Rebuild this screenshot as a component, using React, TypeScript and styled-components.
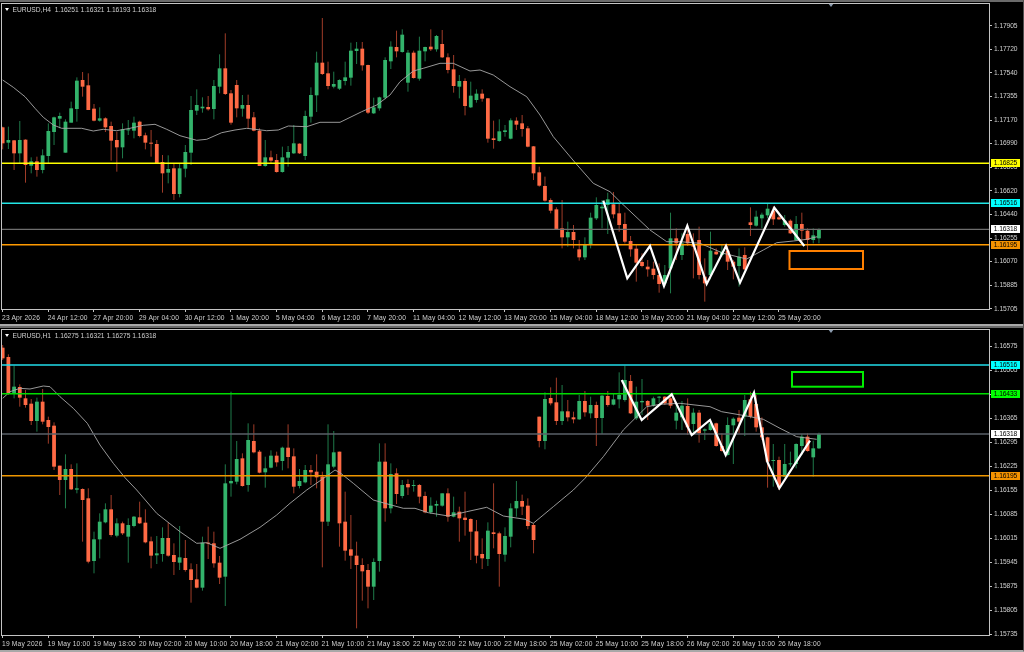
import React from 'react';
import styled, {createGlobalStyle} from 'styled-components';

const GlobalStyle = createGlobalStyle`
  html, body {
    margin: 0;
    background: #000;
  }
`;

// candles traced off the screenshot at 3x: direction, high, body top, body bottom, low
const h4Candles = `
d 380 382 430 448,u 380 420 428 447,d 420 421 460 510,u 363 420 460 490,d 418 419 495 548,u 472 484 497 520,d 470 484 510 530,u 448 466 510 520,
u 370 393 468 490,u 350 352 396 435,u 338 348 356 385,u 358 365 458 458,u 305 325 368 368,u 232 242 327 365,d 216 240 260 290,d 220 256 330 330,
d 312 326 362 364,u 322 355 362 365,d 352 355 382 396,d 365 378 422 482,d 395 420 442 515,u 370 388 442 475,u 360 388 390 405,u 350 368 392 415,
d 362 365 408 412,d 398 406 428 448,d 390 428 431 470,d 420 432 490 492,d 465 486 520 578,u 466 507 518 550,d 490 505 582 600,u 490 505 582 592,
u 435 456 506 532,u 288 330 458 495,u 268 315 332 345,u 292 320 325 338,d 288 321 328 332,u 240 258 327 358,u 163 205 260 280,d 100 205 282 285,
d 270 280 368 374,d 240 255 325 352,u 285 315 326 350,d 284 315 356 385,d 336 352 392 394,d 385 392 498 498,u 420 472 498 500,d 452 472 482 490,
d 462 480 516 518,u 440 472 516 518,u 438 456 473 500,u 375 430 460 462,d 430 431 460 462,u 332 348 468 480,u 262 285 350 368,u 155 188 286 336,
d 54 188 222 225,d 185 220 258 268,u 215 252 260 265,u 238 240 266 270,u 185 232 243 256,u 128 152 233 257,u 126 146 153 192,d 126 146 196 212,
d 194 195 338 342,u 293 322 340 342,u 290 292 325 332,u 172 180 293 298,u 124 140 184 207,d 92 141 154 172,u 88 104 156 158,u 150 158 248 275,
d 152 158 234 236,u 110 152 236 242,u 140 141 154 184,d 88 140 148 153,u 105 108 148 155,d 90 132 172 174,d 160 172 210 220,d 165 208 258 278,
u 225 243 260 295,d 235 243 318 346,u 245 287 322 324,u 268 281 300 308,d 268 281 296 305,d 294 295 416 428,d 362 415 420 446,u 358 394 423 425,
u 375 391 396 410,u 355 361 416 418,d 352 362 374 390,d 345 370 387 410,d 378 385 440 442,d 438 439 520 540,d 500 517 557 560,d 530 558 602 605,
d 595 600 632 640,d 622 628 688 690,d 600 685 712 745,u 665 696 712 740,d 675 696 720 745,d 720 748 772 782,u 712 735 772 780,u 638 653 735 745,
u 592 615 655 660,u 600 620 625 685,u 578 598 615 702,d 576 613 643 655,d 610 640 675 695,d 638 672 725 730,d 708 723 748 770,d 735 746 788 845,
d 760 786 798 802,d 780 800 808 830,d 785 806 825 838,d 790 825 852 878,u 795 825 850 858,u 638 715 805 880,d 685 715 730 780,u 700 730 765 780,
d 675 702 730 738,d 700 735 740 835,d 680 720 825 838,d 775 830 850 905,u 695 752 825 838,d 745 755 763 765,u 735 755 765 770,d 738 752 785 810,
d 780 785 800 838,u 745 770 798 860,d 742 765 808 810,d 622 667 675 708,u 632 650 677 680,u 638 644 655 685,u 610 626 646 655,d 620 632 658 675,
d 645 652 658 660,u 645 662 675 680,d 658 662 700 702,u 648 672 720 722,d 638 672 692 725,d 685 692 720 750,u 685 706 720 730,u 685 688 715 730
`;

const h1Candles = `
d 1035 1043 1075 1080,d 1063 1071 1180 1185,u 1097 1160 1180 1195,d 1153 1161 1193 1220,d 1170 1195 1215 1223,d 1197 1211 1263 1275,u 1193 1205 1263 1295,d 1167 1205 1265 1273,
d 1250 1260 1281 1331,d 1267 1277 1400 1410,d 1397 1397 1440 1485,u 1363 1407 1440 1525,d 1393 1407 1468 1470,u 1390 1465 1469 1480,d 1465 1467 1500 1625,d 1465 1495 1685 1690,
u 1595 1618 1683 1720,u 1540 1565 1618 1675,u 1510 1528 1567 1570,d 1485 1528 1605 1610,u 1555 1570 1607 1612,d 1565 1570 1600 1605,u 1555 1575 1610 1688,u 1548 1550 1578 1582,
d 1505 1552 1570 1572,d 1528 1568 1627 1630,d 1610 1624 1667 1705,u 1608 1660 1666 1692,u 1582 1614 1662 1685,d 1568 1614 1667 1670,d 1630 1665 1686 1725,u 1578 1672 1688 1710,
d 1620 1674 1710 1715,d 1690 1708 1740 1808,d 1692 1738 1763 1765,u 1610 1628 1763 1772,d 1580 1628 1630 1677,d 1595 1630 1690 1703,d 1668 1688 1733 1752,u 1393 1450 1730 1818,
u 1175 1443 1450 1490,u 1323 1377 1445 1453,d 1360 1375 1458 1460,u 1270 1320 1455 1475,d 1273 1323 1357 1360,d 1350 1355 1418 1420,u 1370 1405 1417 1463,u 1351 1367 1403 1405,
d 1355 1367 1387 1400,u 1340 1343 1383 1411,d 1273 1343 1371 1405,d 1345 1369 1460 1480,u 1407 1443 1458 1465,u 1395 1410 1447 1450,d 1395 1410 1417 1455,d 1363 1415 1432 1465,
d 1415 1430 1565 1702,u 1273 1393 1565 1578,u 1293 1357 1400 1405,d 1355 1355 1570 1640,d 1475 1565 1652 1682,d 1545 1648 1667 1707,d 1625 1667 1695 1885,d 1675 1695 1714 1802,
d 1692 1710 1760 1825,u 1675 1686 1760 1800,u 1330 1385 1683 1715,d 1330 1385 1525 1565,u 1390 1422 1525 1540,d 1405 1420 1482 1512,u 1440 1455 1488 1495,d 1438 1452 1462 1485,
u 1440 1455 1458 1475,d 1452 1455 1490 1510,d 1475 1488 1537 1540,u 1492 1517 1537 1542,u 1502 1512 1517 1550,u 1480 1480 1517 1520,d 1465 1480 1550 1565,u 1490 1537 1550 1552,
d 1520 1535 1555 1625,d 1475 1553 1560 1607,d 1555 1557 1595 1680,d 1560 1594 1667 1690,d 1615 1662 1675 1707,u 1567 1592 1677 1698,d 1450 1597 1602 1645,d 1595 1600 1662 1760,
u 1582 1608 1664 1685,u 1510 1525 1610 1642,u 1443 1503 1525 1550,d 1484 1503 1520 1545,d 1495 1517 1578 1588,d 1570 1575 1620 1660,d 1250 1250 1323 1342,u 1177 1197 1323 1348,
d 1162 1194 1210 1216,d 1133 1207 1263 1275,u 1155 1234 1263 1275,d 1200 1234 1252 1264,d 1235 1252 1258 1270,u 1185 1203 1258 1260,d 1173 1203 1237 1250,u 1190 1215 1240 1255,
d 1205 1215 1254 1338,u 1185 1187 1254 1302,d 1173 1188 1215 1220,u 1182 1198 1214 1216,u 1117 1185 1198 1225,u 1097 1140 1200 1205,d 1125 1143 1240 1242,u 1160 1205 1255 1260,
u 1137 1203 1207 1245,d 1200 1203 1217 1260,u 1190 1195 1217 1220,u 1188 1190 1193 1210,d 1188 1190 1210 1215,d 1185 1195 1217 1225,u 1210 1238 1262 1288,u 1203 1217 1252 1290,
d 1195 1218 1282 1305,u 1225 1238 1272 1300,d 1230 1238 1300 1328,u 1285 1288 1292 1320,u 1260 1270 1290 1292,d 1268 1270 1338 1340,d 1300 1338 1353 1355,u 1252 1275 1365 1367,
u 1252 1256 1276 1392,d 1230 1253 1265 1300,u 1185 1200 1250 1308,d 1175 1198 1250 1255,d 1185 1212 1282 1295,d 1252 1282 1312 1320,d 1310 1312 1385 1463,u 1332 1380 1382 1460,
d 1370 1380 1462 1470,u 1332 1392 1430 1432,u 1355 1390 1392 1400,u 1330 1332 1392 1405,u 1302 1310 1338 1365,d 1300 1310 1353 1355,u 1322 1345 1372 1430,u 1298 1302 1345 1347
`;

const h4Ma =
  '8,240 40,262 75,290 105,325 130,352 160,375 185,385 245,385 280,393 310,388 350,392 390,385 430,376 465,373 500,388 540,407 590,421 620,418 665,398 705,390 740,385 800,392 835,390 865,378 920,380 960,367 1020,367 1085,335 1130,315 1170,285 1200,245 1240,213 1270,205 1320,190 1360,190 1410,213 1440,210 1480,225 1530,260 1580,290 1620,345 1660,410 1727,490 1780,550 1830,575 1865,610 1950,690 2000,725 2040,725 2100,730 2170,760 2240,777 2290,750 2330,728 2380,723 2420,718 2452,710';

const h1Ma =
  '8,1195 30,1175 60,1165 90,1167 130,1158 150,1160 180,1190 220,1225 262,1270 300,1335 340,1390 375,1433 410,1470 470,1540 540,1595 590,1630 620,1628 660,1645 720,1618 780,1582 830,1545 870,1510 920,1470 985,1425 1005,1410 1020,1418 1060,1450 1120,1500 1155,1510 1210,1525 1245,1525 1285,1538 1345,1548 1400,1535 1460,1522 1510,1548 1575,1558 1600,1570 1660,1520 1720,1470 1755,1435 1810,1370 1870,1290 1940,1220 1980,1213 2040,1210 2130,1220 2165,1235 2240,1248 2290,1258 2340,1285 2390,1310 2450,1318';

const h4Zigzag = '1810,602 1882,835 1950,738 1992,858 2062,677 2120,852 2178,738 2220,848 2323,623 2413,738';
const h1Zigzag = '1865,1140 1925,1260 2015,1183 2075,1305 2130,1260 2177,1365 2262,1178 2302,1385 2338,1465 2430,1322';

type Level = {y: number; color: string; width: number};
type Tag = {y: number; bg: string; text: string};
type Box = {x: number; y: number; w: number; h: number; color: string};

const CANDLE_STEP = 17.125 / 3;

const Page = styled.div`
  width: 1024px;
  height: 652px;
  box-sizing: border-box;
  padding-left: 1px;
  border-right: 1px solid #505050;
  border-bottom: 2px solid #a8a8a8;
  background: #000;
  display: flex;
  flex-direction: column;
  overflow: hidden;
  font-family: "Liberation Sans", Arial, sans-serif;
  font-size: 6.7px;
  color: #d0d0d0;
  filter: blur(0.3px);
`;

const ChartWindow = styled.section`
  flex: none;
  height: 324px;
  box-sizing: border-box;
  padding-top: 3px;
  display: grid;
  grid-template-columns: 989px 33px;
  grid-template-rows: 307px 14px;
  position: relative;
`;

const TopStrip = styled.div`
  position: absolute;
  top: 0;
  left: -1px;
  right: 0;
  height: 2px;
  background: #6a6a6a;
`;

const Divider = styled.div`
  flex: none;
  height: 2px;
  margin-left: -1px;
  background: #a8a8a8;
`;

const Plot = styled.div`
  border: 1px solid #c4c4c4;
  position: relative;
  overflow: hidden;
`;

const ChartSvg = styled.svg`
  display: block;
`;

const Title = styled.div`
  position: absolute;
  top: 1px;
  left: 3px;
  display: flex;
  align-items: center;
  gap: 3.5px;
  white-space: pre;
  line-height: 9px;
  letter-spacing: -0.02px;
`;

const TitleArrow = styled.span`
  width: 0;
  height: 0;
  border-left: 2.5px solid transparent;
  border-right: 2.5px solid transparent;
  border-top: 3px solid #fff;
`;

const ShiftMark = styled.span`
  position: absolute;
  top: -1px;
  left: 826px;
  width: 0;
  height: 0;
  border-left: 3px solid transparent;
  border-right: 3px solid transparent;
  border-top: 4px solid #8d9db0;
`;

const PriceAxis = styled.div<{$first: number}>`
  position: relative;
  padding-top: ${p => p.$first}px;
`;

const PriceRow = styled.div<{$step: number}>`
  height: ${p => p.$step}px;
  line-height: ${p => p.$step}px;
  padding-left: 4px;
  position: relative;
  letter-spacing: -0.1px;

  &::before {
    content: '';
    position: absolute;
    left: 0;
    top: 50%;
    width: 2px;
    height: 1px;
    background: #c4c4c4;
  }
`;

const PriceTag = styled.span<{$y: number; $bg: string}>`
  position: absolute;
  left: 1px;
  top: ${p => p.$y - 4}px;
  width: 29px;
  height: 8px;
  line-height: 8px;
  text-align: center;
  background: ${p => p.$bg};
  color: #000;
  letter-spacing: -0.1px;
`;

const TimeAxis = styled.div`
  grid-column: 1 / span 2;
  display: flex;
  padding-left: 1px;
`;

const TimeLabel = styled.div`
  flex: none;
  width: 45.67px;
  line-height: 13px;
  padding-top: 1px;
  white-space: nowrap;
  position: relative;
  letter-spacing: 0.18px;

  &::before {
    content: '';
    position: absolute;
    left: 0;
    top: 0;
    width: 1px;
    height: 2px;
    background: #c4c4c4;
  }
`;

const Wick = styled.line<{$up: boolean}>`
  stroke: ${p => (p.$up ? '#1f7a4a' : '#a03c28')};
  stroke-width: 1;
`;

const CandleBody = styled.rect<{$up: boolean}>`
  fill: ${p => (p.$up ? '#33b36b' : '#ff6a45')};
`;

const MaLine = styled.polyline`
  fill: none;
  stroke: #a8a8a8;
  stroke-width: 0.9;
`;

const Zigzag = styled.polyline`
  fill: none;
  stroke: #fff;
  stroke-width: 2.2;
  stroke-linejoin: miter;
`;

const scalePoints = (points: string) =>
  points
    .split(' ')
    .map(pair => {
      const [x, y] = pair.split(',').map(Number);
      return `${(x / 3).toFixed(1)},${(y / 3).toFixed(1)}`;
    })
    .join(' ');

const parseCandles = (raw: string) =>
  raw
    .trim()
    .split(/,\s*/)
    .map((row, i) => {
      const [dir, high, top, bottom, low] = row.split(' ');
      return {
        x: (8 + 17.125 * i) / 3,
        up: dir === 'u',
        high: Number(high) / 3,
        top: Number(top) / 3,
        bottom: Number(bottom) / 3,
        low: Number(low) / 3,
      };
    });

type ChartProps = {
  title: string;
  originY: number;
  candles: string;
  ma: string;
  zigzag: string;
  levels: Level[];
  box: Box;
  prices: string[];
  priceFirst: number;
  priceStep: number;
  tags: Tag[];
  times: string[];
};

function Chart({title, originY, candles, ma, zigzag, levels, box, prices, priceFirst, priceStep, tags, times}: ChartProps) {
  const plotTop = originY + 1;
  return (
    <ChartWindow>
      <TopStrip />
      <Plot>
        <ChartSvg width={987} height={305} viewBox={`2 ${plotTop} 987 305`}>
          {parseCandles(candles).map((c, i) => (
            <g key={i}>
              <Wick $up={c.up} x1={c.x} x2={c.x} y1={c.high} y2={c.low} />
              <CandleBody $up={c.up} x={c.x - CANDLE_STEP * 0.33} width={CANDLE_STEP * 0.66} y={c.top} height={Math.max(c.bottom - c.top, 1)} />
            </g>
          ))}
          <MaLine points={scalePoints(ma)} />
          {levels.map(l => (
            <line key={l.y} x1={2} x2={989} y1={l.y} y2={l.y} stroke={l.color} strokeWidth={l.width} />
          ))}
          <rect x={box.x} y={box.y} width={box.w} height={box.h} fill="none" stroke={box.color} strokeWidth={2} />
          <Zigzag points={scalePoints(zigzag)} />
        </ChartSvg>
        <Title>
          <TitleArrow />
          {title}
        </Title>
        <ShiftMark />
      </Plot>
      <PriceAxis $first={priceFirst}>
        {prices.map(p => (
          <PriceRow key={p} $step={priceStep}>
            {p}
          </PriceRow>
        ))}
        {tags.map(t => (
          <PriceTag key={t.y} $y={t.y - originY} $bg={t.bg}>
            {t.text}
          </PriceTag>
        ))}
      </PriceAxis>
      <TimeAxis>
        {times.map(t => (
          <TimeLabel key={t}>{t}</TimeLabel>
        ))}
      </TimeAxis>
    </ChartWindow>
  );
}

function App() {
  return (
    <>
      <GlobalStyle />
      <Page>
        <Chart
          title="EURUSD,H4  1.16251 1.16321 1.16193 1.16318"
          originY={3}
          candles={h4Candles}
          ma={h4Ma}
          zigzag={h4Zigzag}
          levels={[
            {y: 163.2, color: '#ffff00', width: 1.6},
            {y: 203.3, color: '#22e6e6', width: 1.6},
            {y: 229.4, color: '#6e6e6e', width: 1.2},
            {y: 244.7, color: '#ff9a00', width: 1.6},
          ]}
          box={{x: 789.5, y: 251, w: 73.5, h: 18, color: '#ff8000'}}
          prices={['1.17905', '1.17720', '1.17540', '1.17355', '1.17170', '1.16990', '1.16805', '1.16620', '1.16440', '1.16255', '1.16070', '1.15885', '1.15705']}
          priceFirst={10.5}
          priceStep={23.6}
          tags={[
            {y: 163, bg: '#ffff00', text: '1.16825'},
            {y: 203, bg: '#00ffff', text: '1.16516'},
            {y: 229.3, bg: '#ffffff', text: '1.16318'},
            {y: 244.7, bg: '#f59300', text: '1.16195'},
          ]}
          times={['23 Apr 2026', '24 Apr 12:00', '27 Apr 20:00', '29 Apr 04:00', '30 Apr 12:00', '1 May 20:00', '5 May 04:00', '6 May 12:00', '7 May 20:00', '11 May 04:00', '12 May 12:00', '13 May 20:00', '15 May 04:00', '18 May 12:00', '19 May 20:00', '21 May 04:00', '22 May 12:00', '25 May 20:00']}
        />
        <Divider />
        <Chart
          title="EURUSD,H1  1.16275 1.16321 1.16275 1.16318"
          originY={329}
          candles={h1Candles}
          ma={h1Ma}
          zigzag={h1Zigzag}
          levels={[
            {y: 365, color: '#22dcea', width: 1.6},
            {y: 393.7, color: '#00dc00', width: 1.6},
            {y: 434, color: '#5a6068', width: 1.4},
            {y: 475.7, color: '#ee9600', width: 1.6},
          ]}
          box={{x: 792, y: 372, w: 71, h: 14.7, color: '#00ee00'}}
          prices={['1.16575', '1.16505', '1.16435', '1.16365', '1.16295', '1.16225', '1.16155', '1.16085', '1.16015', '1.15945', '1.15875', '1.15805', '1.15735']}
          priceFirst={4.7}
          priceStep={24}
          tags={[
            {y: 365, bg: '#00ffff', text: '1.16516'},
            {y: 393.7, bg: '#00ff00', text: '1.16433'},
            {y: 434, bg: '#ffffff', text: '1.16318'},
            {y: 475.7, bg: '#f59300', text: '1.16195'},
          ]}
          times={['19 May 2026', '19 May 10:00', '19 May 18:00', '20 May 02:00', '20 May 10:00', '20 May 18:00', '21 May 02:00', '21 May 10:00', '21 May 18:00', '22 May 02:00', '22 May 10:00', '22 May 18:00', '25 May 02:00', '25 May 10:00', '25 May 18:00', '26 May 02:00', '26 May 10:00', '26 May 18:00']}
        />
      </Page>
    </>
  );
}

export default App;
